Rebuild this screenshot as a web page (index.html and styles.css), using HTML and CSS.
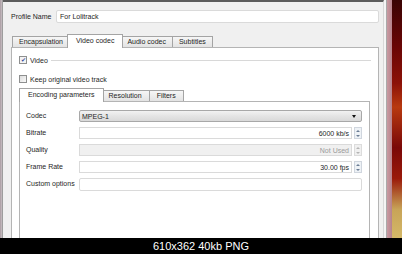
FILE: index.html
```html
<!DOCTYPE html>
<html lang="en">
<head>
<meta charset="utf-8" />
<title>Profile - Video codec</title>
<link rel="stylesheet" href="styles.css">
</head>
<body>
  <div class="screen">
    <div class="window">
      <div class="frame-left"></div>
      <div class="dialog">
        <div class="profile-row">
          <span class="profile-label">Profile Name</span>
          <div class="field">For Lolitrack</div>
        </div>
        <div class="tabs">
          <div class="tab">Encapsulation</div>
          <div class="tab active">Video codec</div>
          <div class="tab">Audio codec</div>
          <div class="tab">Subtitles</div>
        </div>
        <div class="pane">
          <div class="group-title">
            <span class="check checked">&#x2714;</span>
            <span>Video</span>
            <span class="rule"></span>
          </div>
          <div class="check-row">
            <span class="check"></span>
            <span>Keep original video track</span>
          </div>
          <div class="tabs inner-tabs">
            <div class="tab active">Encoding parameters</div>
            <div class="tab">Resolution</div>
            <div class="tab">Filters</div>
          </div>
          <div class="pane inner-pane">
            <div class="form">
              <label>Codec</label>
              <div class="combo"><span>MPEG-1</span><span class="arrow"></span></div>

              <label>Bitrate</label>
              <div class="spin">
                <div class="spin-value">6000 kb/s</div>
                <div class="spin-buttons"><span class="up"></span><span class="down"></span></div>
              </div>

              <label>Quality</label>
              <div class="spin disabled">
                <div class="spin-value">Not Used</div>
                <div class="spin-buttons"><span class="up"></span><span class="down"></span></div>
              </div>

              <label>Frame Rate</label>
              <div class="spin">
                <div class="spin-value">30.00 fps</div>
                <div class="spin-buttons"><span class="up"></span><span class="down"></span></div>
              </div>

              <label>Custom options</label>
              <div class="field custom"></div>
            </div>
          </div>
        </div>
      </div>
      <div class="frame-right"></div>
      <div class="desktop"></div>
    </div>
    <div class="infobar">610x362 40kb PNG</div>
  </div>
</body>
</html>
```

FILE: styles.css
```css
* {
  margin: 0;
  padding: 0;
  box-sizing: border-box;
}

body {
  margin: 0;
  background: #000;
  font-family: "Liberation Sans", Arial, sans-serif;
  font-size: 7px;
  color: #1e1e1e;
}

.screen {
  width: 402px;
  height: 254px;
  display: flex;
  flex-direction: column;
  overflow: hidden;
}

.window {
  flex: 1;
  display: flex;
  min-height: 0;
}

.frame-left {
  width: 3px;
  background: linear-gradient(to right, #a89aa0, #c8bfc3);
  border-right: 1px solid #9d9d9d;
}

.dialog {
  flex: 1;
  display: flex;
  flex-direction: column;
  background: #f0f0f0;
  border-top: 2px solid #5c5c5c;
  padding: 8px 4px 0 8px;
  overflow: hidden;
  border-right: 1px solid #d8d8d8;
}

.frame-right {
  width: 8px;
  background: linear-gradient(to right, #f4f4f4 0, #f4f4f4 2px, #a9a9a9 2px, #a9a9a9 3px, #c99aa2 3px, #b6838c 8px);
}

.desktop {
  width: 10px;
  background: linear-gradient(to bottom, #3a0404 0, #6a0606 20%, #8c1208 35%, #b83a10 45%, #7a0808 62%, #9a1a0a 75%, #c8a458 88%, #d4b868 100%);
}

.profile-row {
  display: flex;
  align-items: center;
  height: 13px;
}

.profile-label {
  width: 45px;
}

.field {
  flex: 1;
  height: 13px;
  line-height: 12px;
  padding-left: 3px;
  background: #fff;
  border: 1px solid #dadada;
  border-radius: 2px;
}

/* tabs */

.tabs {
  display: flex;
  align-items: flex-end;
  height: 13px;
  margin-top: 11px;
  padding-left: 1px;
  position: relative;
  z-index: 1;
}

.tab {
  height: 11px;
  line-height: 10px;
  padding: 0 6px;
  border: 1px solid #a4a4a4;
  border-bottom: 0;
  border-right: 0;
  background: linear-gradient(to bottom, #f6f6f6, #e3e3e3);
}

.tab:last-child {
  border-right: 1px solid #a4a4a4;
}

.tab.active {
  height: 13px;
  line-height: 12px;
  padding: 0 8px;
  margin: 0 -2px -1px;
  height: 14px;
  background: #fff;
  border-right: 1px solid #a4a4a4;
  position: relative;
}

.tab.active + .tab {
  border-left: 0;
}

.pane {
  flex: 1;
  background: #fff;
  border: 1px solid #b4b4b4;
  border-bottom: 0;
  padding: 8px 7px 0 7px;
  display: flex;
  flex-direction: column;
}

/* checkboxes */

.group-title,
.check-row {
  display: flex;
  align-items: center;
  height: 8px;
}

.check-row {
  margin-top: 11px;
}

.check {
  width: 8px;
  height: 8px;
  margin-right: 3px;
  border: 1px solid #8e8f8f;
  background: linear-gradient(135deg, #dcdcdc, #fafafa);
  font-size: 6px;
  line-height: 6px;
  text-align: center;
  color: #3a4d9a;
}

.check.checked {
  background: #f4f4f4;
}

.rule {
  flex: 1;
  height: 1px;
  margin: 0 0 0 3px;
  background: #d8d8d8;
}

.inner-tabs {
  margin-top: 5px;
  padding-left: 0;
}

.inner-tabs .tab {
  padding: 0 7px;
}

.inner-tabs .tab.active {
  margin-left: 0;
  padding: 0 8px;
}

.inner-pane {
  margin-right: 1px;
  padding: 8px 7px 0 6px;
}

/* form */

.form {
  display: grid;
  grid-template-columns: 53px 1fr;
  grid-auto-rows: 12px;
  row-gap: 5px;
  align-items: center;
}

.form label {
  line-height: 12px;
}

.combo {
  height: 12px;
  display: flex;
  align-items: center;
  justify-content: space-between;
  padding: 0 5px 0 2px;
  border: 1px solid #a8a8a8;
  border-radius: 2px;
  background: linear-gradient(to bottom, #f2f2f2, #e4e4e4 50%, #d9d9d9);
}

.arrow {
  width: 0;
  height: 0;
  border-left: 2.5px solid transparent;
  border-right: 2.5px solid transparent;
  border-top: 3px solid #111;
}

.spin {
  height: 12px;
  display: flex;
  gap: 2px;
}

.spin-value {
  flex: 1;
  line-height: 11px;
  text-align: right;
  padding-right: 2px;
  border: 1px solid #dadada;
  background: #fff;
}

.spin-buttons {
  width: 8px;
  display: flex;
  flex-direction: column;
  justify-content: space-around;
  align-items: center;
  border: 1px solid #d0d6de;
  background: #eef2f6;
}

.spin-buttons span {
  width: 0;
  height: 0;
  border-left: 2px solid transparent;
  border-right: 2px solid transparent;
}

.spin-buttons .up {
  border-bottom: 2px solid #6a7c94;
}

.spin-buttons .down {
  border-top: 2px solid #6a7c94;
}

.spin.disabled .spin-value {
  background: #f0f0f0;
  color: #9a9a9a;
}

.spin.disabled .spin-buttons {
  background: #f0f0f0;
  border-color: #dcdcdc;
}

.spin.disabled .spin-buttons span {
  border-bottom-color: #b4b4b4;
  border-top-color: #b4b4b4;
}

.field.custom {
  height: 13px;
  margin-right: 0;
}

.infobar {
  height: 16px;
  background: #000;
  color: #fff;
  font-size: 11px;
  line-height: 16px;
  text-align: center;
}
```
